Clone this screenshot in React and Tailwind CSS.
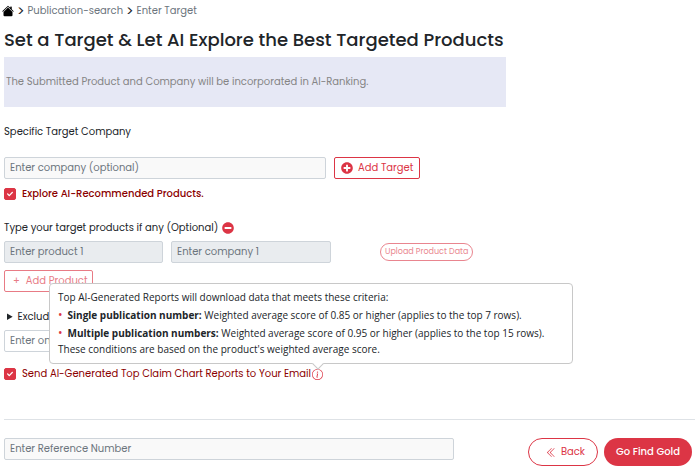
import { useState } from "react";
import { BsChevronDoubleLeft, BsHouseFill, BsInfoCircle } from "react-icons/bs";
import { FaCheck, FaMinusCircle, FaPlusCircle } from "react-icons/fa";

const inputClass =
  "h-[22px] rounded-xs border border-[#ced4da] px-[5px] text-[10px] placeholder:text-[#6c757d] placeholder:opacity-100 focus:outline-none";

function CheckField({ id, label, labelClass = "", children }) {
  const [checked, setChecked] = useState(true);

  return (
    <div className="relative flex h-4 items-center">
      <span className="relative mr-[6px] flex size-3">
        <input
          id={id}
          type="checkbox"
          checked={checked}
          onChange={(e) => setChecked(e.target.checked)}
          className="size-3 appearance-none rounded-xs border border-[#dc3545] checked:bg-[#dc3545]"
        />
        {checked && (
          <FaCheck className="pointer-events-none absolute inset-0 m-auto size-[6px] text-white" />
        )}
      </span>
      <label htmlFor={id} className={`text-[#8b0000] ${labelClass}`}>
        {label}
      </label>
      {children}
    </div>
  );
}

function ReportInfo() {
  return (
    <>
      <div
        role="tooltip"
        className="absolute bottom-full left-[45px] mb-[2px] w-[524px] rounded-sm border border-[#c8c8c8] bg-white px-2 pt-[5px] pb-[6px] font-['Open_Sans',sans-serif] text-[10px] text-[#212529]"
      >
        <p>Top AI-Generated Reports will download data that meets these criteria:</p>
        <ul className="pt-px">
          <li className="flex h-[18px] items-center">
            <span className="mr-[5px] text-xs leading-4 text-[#dc3545]">•</span>
            <span>
              <b>Single publication number:</b> Weighted average score of 0.85 or
              higher (applies to the top 7 rows).
            </span>
          </li>
          <li className="flex h-[18px] items-center">
            <span className="mr-[5px] text-xs leading-4 text-[#dc3545]">•</span>
            <span>
              <b>Multiple publication numbers:</b> Weighted average score of 0.95
              or higher (applies to the top 15 rows).
            </span>
          </li>
        </ul>
        <p className="leading-[15px]">
          These conditions are based on the product's weighted average score.
        </p>
      </div>
      <span className="relative ml-px flex">
        <button type="button" aria-label="Report criteria" className="text-[#dc3545]">
          <BsInfoCircle className="size-[11px]" />
        </button>
        <span className="absolute bottom-full left-1/2 mb-px size-2 -translate-x-1/2 rotate-45 border-r border-b border-[#c8c8c8] bg-white" />
      </span>
    </>
  );
}

export default function App() {
  return (
    <main className="bg-white pl-1 font-[Poppins,Inter,sans-serif] text-[10px] leading-4 text-[#212529]">
      <nav className="flex h-[21px] items-center gap-[3px] text-[#6c757d]">
        <a href="#home" aria-label="Home" className="-ml-[2px] text-black">
          <BsHouseFill className="size-3" />
        </a>
        <span className="text-sm leading-4 text-[#212529]">&gt;</span>
        <a href="#publication-search">Publication-search</a>
        <span className="text-sm leading-4 text-[#212529]">&gt;</span>
        <a href="#enter-target">Enter Target</a>
      </nav>

      <h1 className="flex h-9 items-center pt-[2px] text-[18px] font-medium whitespace-nowrap">
        Set a Target &amp; Let AI Explore the Best Targeted Products
      </h1>

      <p className="flex h-[50px] max-w-[502px] items-center bg-[#e6e8f5] px-[2px] text-[#858585]">
        The Submitted Product and Company will be incorporated in AI-Ranking.
      </p>

      <form onSubmit={(e) => e.preventDefault()}>
        <label htmlFor="company" className="mt-[17px] block">
          Specific Target Company
        </label>
        <div className="mt-[17px] flex gap-2">
          <input
            id="company"
            type="text"
            placeholder="Enter company (optional)"
            className={`${inputClass} w-[322px] bg-[#f9f9f9]`}
          />
          <button
            type="button"
            className="flex h-[22px] items-center gap-[5px] rounded-xs border border-[#dc3545] px-[6px] text-[#dc3545]"
          >
            <FaPlusCircle className="size-3" />
            Add Target
          </button>
        </div>

        <div className="mt-[7px]">
          <CheckField
            id="explore"
            label="Explore AI-Recommended Products."
            labelClass="font-medium"
          />
        </div>

        <div className="mt-[18px] flex items-center gap-1">
          <span>Type your target products if any (Optional)</span>
          <button type="button" aria-label="Remove products" className="text-[#dc3545]">
            <FaMinusCircle className="size-3" />
          </button>
        </div>
        <div className="mt-[5px] flex items-center gap-2">
          <input
            type="text"
            disabled
            aria-label="Product 1"
            placeholder="Enter product 1"
            className={`${inputClass} w-[159px] bg-[#e9ecef]`}
          />
          <input
            type="text"
            disabled
            aria-label="Company 1"
            placeholder="Enter company 1"
            className={`${inputClass} w-[160px] bg-[#e9ecef]`}
          />
          <button
            type="button"
            disabled
            className="ml-[41px] h-[18px] rounded-full border border-[#dc3545] px-1 text-[8px] leading-4 text-[#dc3545] opacity-60"
          >
            Upload Product Data
          </button>
        </div>
        <button
          type="button"
          disabled
          className="mt-[7px] flex h-[22px] items-center gap-[6px] rounded-xs border border-[#dc3545] pr-1 pl-2 text-[#dc3545] opacity-65"
        >
          <span>+</span>
          Add Product
        </button>

        <details className="mt-[17px]">
          <summary className="pl-[3px]">Exclude Companies</summary>
        </details>
        <input
          type="text"
          aria-label="Excluded companies"
          placeholder="Enter one or more companies"
          className={`${inputClass} mt-[5px] block w-[322px] bg-white`}
        />

        <div className="mt-[14px]">
          <CheckField
            id="reports"
            label="Send AI-Generated Top Claim Chart Reports to Your Email"
          >
            <ReportInfo />
          </CheckField>
        </div>

        <hr className="mt-[37px] border-[#dee2e6]" />

        <div className="mt-[18px] flex items-start pr-[3px]">
          <input
            type="text"
            aria-label="Reference number"
            placeholder="Enter Reference Number"
            className={`${inputClass} w-[450px] bg-[#f9f9f9]`}
          />
          <div className="ml-auto flex gap-[6px]">
            <button
              type="button"
              className="flex h-7 w-[70px] items-center justify-end gap-1 rounded-full border border-[#dc3545] pr-3 text-[#dc3545]"
            >
              <BsChevronDoubleLeft className="size-[11px]" />
              Back
            </button>
            <button
              type="submit"
              className="h-7 w-[88px] rounded-full bg-[#dc3545] font-medium text-white"
            >
              Go Find Gold
            </button>
          </div>
        </div>
      </form>
    </main>
  );
}
